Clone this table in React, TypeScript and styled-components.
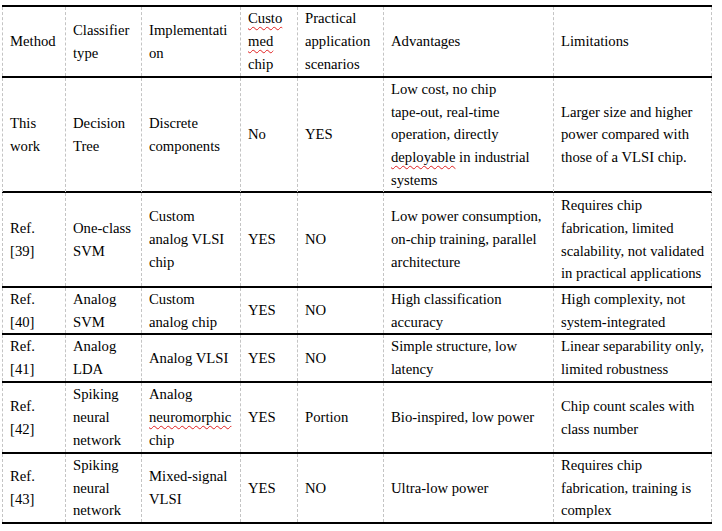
import styled, { createGlobalStyle } from 'styled-components';
import { ReactNode } from 'react';

type Cell = ReactNode[];

type RowData = {
  height: number,
  cells: Cell[],
}

const SERIF = '"Liberation Serif", "Times New Roman", serif';

const GlobalStyle = createGlobalStyle`
  html, body {
    margin: 0;
    padding: 0;
    background: #ffffff;
  }
`;

const StyledPage = styled.div`
  width: 722px;
  height: 531px;
  padding: 5px 0 0 2px;
  box-sizing: border-box;
  background: #ffffff;
  font-family: ${SERIF};
  color: #000000;
`;

const StyledTable = styled.div`
  width: 710px;
  display: flex;
  flex-direction: column;
  border-top: 2px solid #000000;
`;

const StyledRow = styled.div<{ $height: number }>`
  display: grid;
  grid-template-columns: 63px 76px 99px 57px 86px 170px 159px;
  height: ${(props) => props.$height}px;
  border-bottom: 2px solid #000000;
`;

const StyledCell = styled.div`
  display: flex;
  flex-direction: column;
  justify-content: center;
  box-sizing: border-box;
  padding: 0 2px 0 7px;
  border-left: 1px dashed #c4c4c4;
  font-family: ${SERIF};
  font-size: 14.7px;
  line-height: 22.7px;
  white-space: nowrap;

  &:last-child {
    border-right: 1px dashed #c4c4c4;
  }
`;

const StyledLine = styled.span`
  display: block;
`;

const StyledMisspelt = styled.span`
  text-decoration: underline wavy #e02020;
  text-decoration-thickness: 1px;
  text-underline-offset: 3px;
`;

const rows: RowData[] = [
  {
    height: 69,
    cells: [
      ['Method'],
      ['Classifier', 'type'],
      ['Implementati', 'on'],
      [<StyledMisspelt>Custo</StyledMisspelt>, <StyledMisspelt>med</StyledMisspelt>, 'chip'],
      ['Practical', 'application', 'scenarios'],
      ['Advantages'],
      ['Limitations'],
    ],
  },
  {
    height: 113,
    cells: [
      ['This', 'work'],
      ['Decision', 'Tree'],
      ['Discrete', 'components'],
      ['No'],
      ['YES'],
      [
        'Low cost, no chip',
        'tape-out, real-time',
        'operation, directly',
        <><StyledMisspelt>deployable</StyledMisspelt> in industrial</>,
        'systems',
      ],
      ['Larger size and higher', 'power compared with', 'those of a VLSI chip.'],
    ],
  },
  {
    height: 93,
    cells: [
      ['Ref.', '[39]'],
      ['One-class', 'SVM'],
      ['Custom', 'analog VLSI', 'chip'],
      ['YES'],
      ['NO'],
      ['Low power consumption,', 'on-chip training, parallel', 'architecture'],
      ['Requires chip', 'fabrication, limited', 'scalability, not validated', 'in practical applications'],
    ],
  },
  {
    height: 45,
    cells: [
      ['Ref.', '[40]'],
      ['Analog', 'SVM'],
      ['Custom', 'analog chip'],
      ['YES'],
      ['NO'],
      ['High classification', 'accuracy'],
      ['High complexity, not', 'system-integrated'],
    ],
  },
  {
    height: 46,
    cells: [
      ['Ref.', '[41]'],
      ['Analog', 'LDA'],
      ['Analog VLSI'],
      ['YES'],
      ['NO'],
      ['Simple structure, low', 'latency'],
      ['Linear separability only,', 'limited robustness'],
    ],
  },
  {
    height: 69,
    cells: [
      ['Ref.', '[42]'],
      ['Spiking', 'neural', 'network'],
      ['Analog', <StyledMisspelt>neuromorphic</StyledMisspelt>, 'chip'],
      ['YES'],
      ['Portion'],
      ['Bio-inspired, low power'],
      ['Chip count scales with', 'class number'],
    ],
  },
  {
    height: 68,
    cells: [
      ['Ref.', '[43]'],
      ['Spiking', 'neural', 'network'],
      ['Mixed-signal', 'VLSI'],
      ['YES'],
      ['NO'],
      ['Ultra-low power'],
      ['Requires chip', 'fabrication, training is', 'complex'],
    ],
  },
];

export default function App() {
  return (
    <>
      <GlobalStyle />
      <StyledPage>
        <StyledTable>
          {rows.map((row, rowIndex) => (
            <StyledRow key={rowIndex} $height={row.height}>
              {row.cells.map((cell, cellIndex) => (
                <StyledCell key={cellIndex}>
                  {cell.map((line, lineIndex) => (
                    <StyledLine key={lineIndex}>{line}</StyledLine>
                  ))}
                </StyledCell>
              ))}
            </StyledRow>
          ))}
        </StyledTable>
      </StyledPage>
    </>
  );
}
